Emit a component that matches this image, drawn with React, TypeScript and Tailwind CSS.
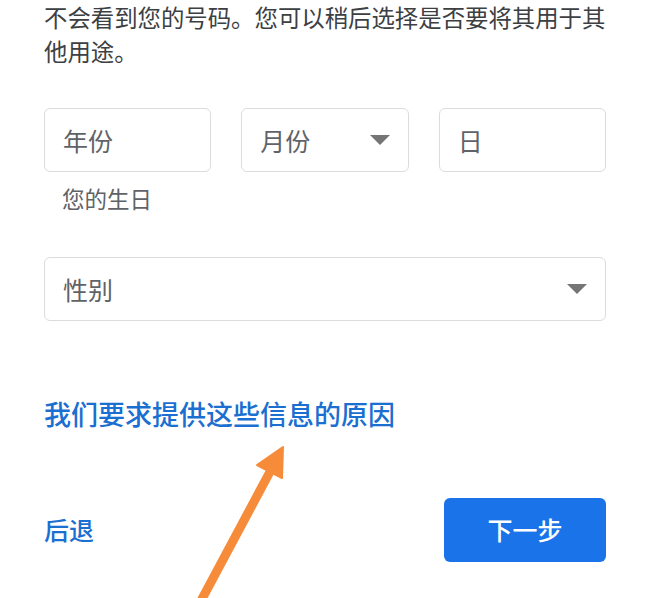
const cjk = { fontFamily: '"Noto Sans CJK SC", "Noto Sans", sans-serif' };

const Caret = () => (
  <svg width="20" height="10" viewBox="0 0 20 10" className="shrink-0">
    <path d="M0 0 L20 0 L10 10 Z" fill="#757575" />
  </svg>
);

const Field = ({ label, caret }: { label: string; caret?: boolean }) => (
  <div className="h-[64px] flex items-center justify-between pl-[18px] pr-[18px] border border-[#dadce0] rounded-[6px] bg-white">
    <span className="text-[25px] text-[#5f6368] leading-none">{label}</span>
    {caret && <Caret />}
  </div>
);

export default function App() {
  return (
    <div className="relative w-[650px] h-[598px] overflow-hidden bg-white" style={cjk}>
      <div className="px-[44px]">
        {/* Intro text */}
        <p className="-mr-[4px] text-[23.4px] leading-[34px] text-[#3c4043]">
          不会看到您的号码。您可以稍后选择是否要将其用于其他用途。
        </p>

        {/* Birthday */}
        <div className="mt-[40px] grid grid-cols-3 gap-[30px]">
          <Field label="年份" />
          <Field label="月份" caret />
          <Field label="日" />
        </div>
        <p className="mt-[11px] pl-[18px] text-[22.5px] leading-[30px] text-[#5f6368]">您的生日</p>

        {/* Gender */}
        <div className="mt-[44px]">
          <Field label="性别" caret />
        </div>

        {/* Link */}
        <p className="mt-[78px] text-[27px] leading-[30px] font-medium text-[#1a6fd0] whitespace-nowrap">
          我们要求提供这些信息的原因
        </p>

        {/* Actions */}
        <div className="mt-[69px] flex items-center justify-between">
          <span className="text-[25px] font-medium text-[#1a6fd0]">后退</span>
          <button className="w-[162px] h-[64px] rounded-[6px] bg-[#1a73e8] text-white text-[25px] font-medium">
            下一步
          </button>
        </div>
      </div>

      {/* Annotation arrow */}
      <svg className="absolute inset-0 pointer-events-none" width="650" height="598" viewBox="0 0 650 598">
        <line x1="195" y1="612" x2="272" y2="468" stroke="#f68b3a" strokeWidth="9" />
        <path d="M283 447 L257 465 L282 478 Z" fill="#f68b3a" stroke="#f68b3a" strokeWidth="2" strokeLinejoin="round" />
      </svg>
    </div>
  );
}
